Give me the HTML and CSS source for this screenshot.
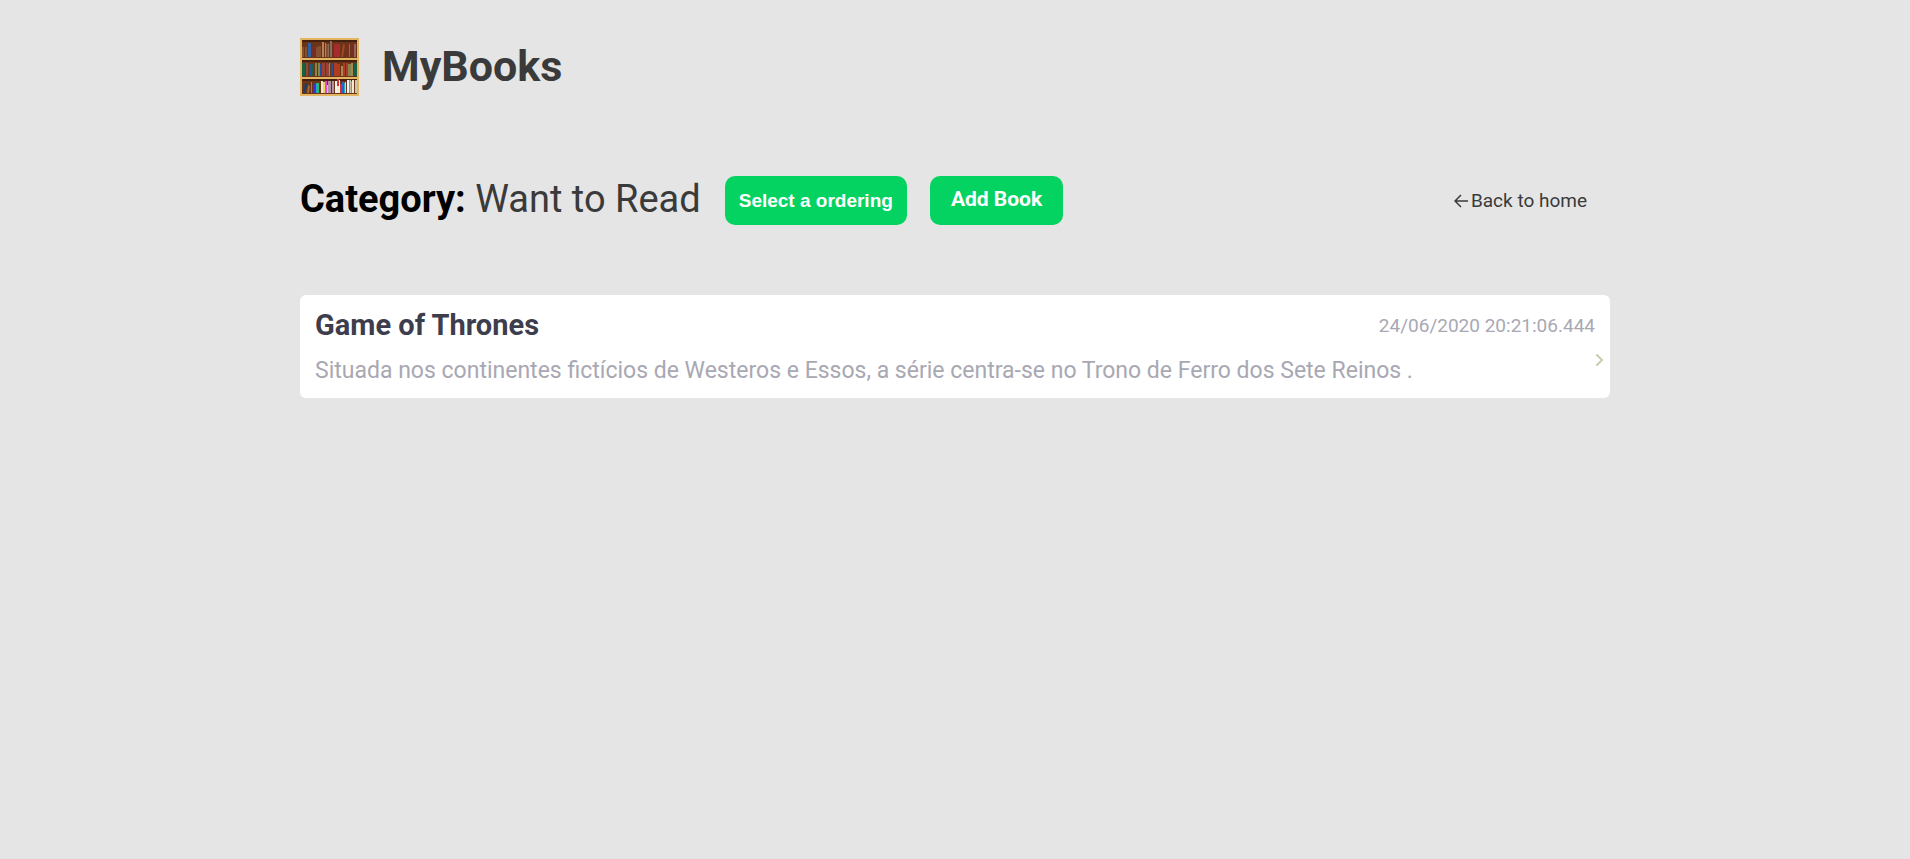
FILE: index.html
```html
<!DOCTYPE html>
<html lang="en">
<head>
<meta charset="utf-8">
<title>MyBooks</title>
<link rel="stylesheet" href="styles.css">
</head>
<body>
<div class="page">
  <header class="brand">
    <svg class="logo" viewBox="0 0 59 58" aria-hidden="true">
      <rect width="59" height="58" fill="#e3b561"/>
      <path fill="#6b3317" d="M2 2h55v18H2zM2 22h55v17H2zM2 41h55v15H2z"/>
      <path fill="#45200f" d="M2 2h55v2H2zM2 22h55v2H2zM2 41h55v2H2z"/>
      <g>
        <path fill="#84502f" d="M2 9h2v10H2zM5 9h2v10H5zM16 9h2v10h-2zM18 8h3v11h-3zM26 6h2v13h-2z"/>
        <path fill="#2861a4" d="M8 5h3v14H8z"/>
        <path fill="#7a2b23" d="M12 8h2v11h-2zM14 9h2v10h-2zM47 5h2v14h-2zM51 6h2v13h-2z"/>
        <path fill="#b98155" d="M22 4h2v15h-2zM25 5h1v14h-1z"/>
        <path fill="#8d6b58" d="M30 3h2v16h-2zM28 6h1v13h-1zM49 6h1v13h-1zM54 6h2v13h-2z"/>
        <path fill="#a52c2d" d="M34 6h3v13h-3zM37 6h3v13h-3z"/>
        <path fill="#a64423" d="M43 6l2 1-2 12h-2z"/>
      </g>
      <g>
        <path fill="#176042" d="M2 25h3v13H2zM12 26h2v12h-2zM54 25h3v13h-3z"/>
        <path fill="#284f91" d="M9 26h3v12H9zM20 26h2v12h-2zM31 25h2v13h-2z"/>
        <path fill="#8e4b35" d="M6 25h2v13H6zM24 25h1v13h-1zM28 26h2v12h-2z"/>
        <path fill="#87834a" d="M15 25h2v13h-2zM18 25h2v13h-2zM48 26h3v12h-3z"/>
        <path fill="#a43c35" d="M22 25h2v13h-2zM26 25h2v13h-2zM46 25h2v13h-2z"/>
        <path fill="#b03c1d" d="M34 25h3v13h-3zM37 26h3v12h-3zM43 25h2v13h-2z"/>
        <path fill="#ad8551" d="M29 25h1v13h-1zM41 28h2v10h-2zM51 25h2v13h-2z"/>
      </g>
      <g>
        <path fill="#233d60" d="M5 45l3 1-3 9H3z"/>
        <path fill="#a56532" d="M8 47l2 1-1 7H7z"/>
        <path fill="#27b56a" d="M11 44h1v11h-1zM18 45h1v10h-1z"/>
        <path fill="#442ce0" d="M13 46h3v9h-3z"/>
        <path fill="#28a7c2" d="M16 45h2v10h-2zM44 45h1v10h-1z"/>
        <path fill="#f3e9cc" d="M21 43h2v12h-2zM37 42h2v13h-2zM52 42h2v13h-2z"/>
        <path fill="#e9d457" d="M23 44h2v11h-2zM26 47h2v8h-2zM45 44h1v11h-1z"/>
        <path fill="#e34bd2" d="M25 43h2v12h-2z"/>
        <path fill="#b28fa1" d="M28 43h3v12h-3zM32 43h2v12h-2z"/>
        <path fill="#f4f2ef" d="M35 43h2v12h-2zM39 42h1v13h-1zM47 42h2v13h-2z"/>
        <path fill="#d52d32" d="M37 41h2v7h-2zM40 46h2v9h-2z"/>
        <path fill="#285fd0" d="M42 44h2v11h-2z"/>
        <path fill="#5fad64" d="M49 42h1v13h-1zM51 43h1v12h-1z"/>
        <path fill="#c9c6b0" d="M50 42h1v13h-1zM55 42h2v13h-2z"/>
      </g>
    </svg>
    <h1 class="brand-name">MyBooks</h1>
  </header>

  <main>
    <div class="toolbar">
      <h2 class="heading"><strong>Category:</strong> Want to Read</h2>
      <button class="button ordering" type="button">Select a ordering</button>
      <button class="button add" type="button">Add Book</button>
      <a class="back" href="#">
        <svg class="back-icon" viewBox="0 0 14 14" aria-hidden="true"><path d="M14 7H1M7 1L1 7l6 6"/></svg>Back to home
      </a>
    </div>

    <a class="book" href="#">
      <div class="book-top">
        <h3 class="book-title">Game of Thrones</h3>
        <time class="book-date">24/06/2020 20:21:06.444</time>
      </div>
      <p class="book-text">Situada nos continentes fictícios de Westeros e Essos, a série centra-se no Trono de Ferro dos Sete Reinos .</p>
      <svg class="chevron" viewBox="0 0 8 12" aria-hidden="true"><path d="M1 1l5 5-5 5"/></svg>
    </a>
  </main>
</div>
</body>
</html>
```
FILE: styles.css
```css
* {
  box-sizing: border-box;
  margin: 0;
  padding: 0;
}

body {
  background: #e5e5e5;
  color: #3a3a3a;
  font-family: Roboto, sans-serif;
}

.page {
  max-width: 1310px;
  margin: 0 auto;
  padding-top: 38px;
}

.brand {
  display: flex;
  align-items: center;
  gap: 23px;
}

.logo {
  width: 59px;
  height: 58px;
}

.brand-name {
  padding-bottom: 2px;
  font-size: 43px;
  line-height: 56px;
}

.toolbar {
  display: flex;
  align-items: center;
  margin-top: 80px;
}

.heading {
  margin-right: 24px;
  padding-bottom: 3px;
  font-size: 38px;
  font-weight: 400;
  line-height: 46px;
}

.heading strong {
  color: #000;
  font-weight: 700;
}

.button {
  height: 49px;
  border: 0;
  border-radius: 10px;
  background: #04d361;
  color: #fff;
  font-weight: 700;
}

.ordering {
  margin-right: 23px;
  padding: 0 14px;
  font-family: "Liberation Sans", Arial, sans-serif;
  font-size: 19px;
}

.add {
  padding: 0 21px 3px;
  font-family: Roboto, sans-serif;
  font-size: 21px;
}

.back {
  display: flex;
  align-items: center;
  gap: 3px;
  margin-left: auto;
  margin-right: 23px;
  color: #3a3a3a;
  font-size: 19px;
  text-decoration: none;
}

.back-icon {
  width: 14px;
  height: 14px;
  fill: none;
  stroke: currentColor;
  stroke-width: 1.5;
}

.book {
  position: relative;
  display: block;
  margin-top: 70px;
  padding: 14px 15px 13px;
  border-radius: 6px;
  background: #fff;
  color: #a8a8b3;
  text-decoration: none;
}

.book-top {
  display: flex;
  align-items: center;
  justify-content: space-between;
}

.book-title {
  color: #3d3d4d;
  font-size: 29px;
  line-height: 33px;
}

.book-date {
  font-size: 19px;
}

.book-text {
  margin-top: 15px;
  font-size: 23px;
  line-height: 28px;
}

.chevron {
  position: absolute;
  top: 59px;
  right: 6px;
  width: 8px;
  height: 12px;
  fill: none;
  stroke: #cbcbb5;
  stroke-width: 2;
  stroke-linecap: round;
  stroke-linejoin: round;
}
```
